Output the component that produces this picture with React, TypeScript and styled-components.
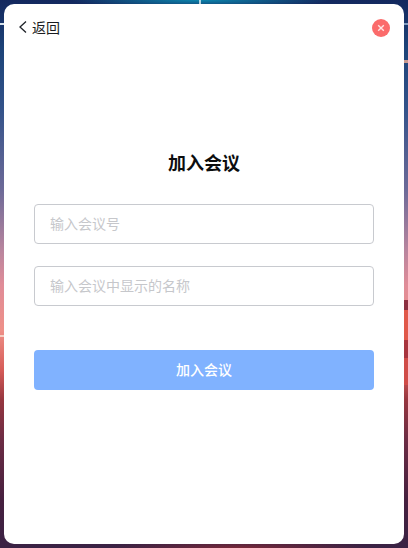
import React from "react";
import styled, { createGlobalStyle } from "styled-components";

const GlobalStyle = createGlobalStyle`
  html, body { margin: 0; padding: 0; height: 100%; }
  #root { height: 100%; }
  * { box-sizing: border-box; }
  input::placeholder { color: #c6c7cb; opacity: 1; }
`;

const Backdrop = styled.div`
  width: 408px;
  height: 548px;
  padding: 4px;
  overflow: hidden;
  font-family: "Noto Sans CJK SC", "Liberation Sans", sans-serif;
  background:
    linear-gradient(#ffffffb0, #ffffffb0) 199px 0 / 2px 4px no-repeat,
    linear-gradient(#d8e4ee, #d8e4ee) 0 23px / 4px 2px no-repeat,
    linear-gradient(#7f9cc0, #7f9cc0) 404px 23px / 4px 2px no-repeat,
    linear-gradient(#c89a90, #c89a90) 404px 60px / 4px 3px no-repeat,
    linear-gradient(#f6d0c4, #f6d0c4) 0 335px / 4px 2px no-repeat,
    linear-gradient(#8c2f40, #8c2f40) 404px 300px / 4px 10px no-repeat,
    linear-gradient(#e0584a, #e0584a) 404px 310px / 4px 30px no-repeat,
    linear-gradient(#a8343e, #a8343e) 404px 340px / 4px 18px no-repeat,
    linear-gradient(#d04c48, #d04c48) 404px 358px / 4px 27px no-repeat,
    radial-gradient(ellipse 130px 8px at 200px 0, #0c86ae 0%, #0c86ae00 100%),
    radial-gradient(ellipse 130px 8px at 240px 548px, #7a2838 0%, #7a283800 100%),
    linear-gradient(
      180deg,
      #13285e 0px,
      #1d4479 50px,
      #34538a 110px,
      #6d6a98 190px,
      #b8859e 250px,
      #e08c98 285px,
      #ee9088 330px,
      #d65c58 370px,
      #96363f 400px,
      #6c2c44 440px,
      #46203f 500px,
      #3a2244 548px
    );
`;

const Card = styled.main`
  height: 540px;
  border-radius: 10px;
  background: #fff;
  padding: 14px 14px 0;
  display: flex;
  flex-direction: column;
`;

const TopBar = styled.header`
  display: flex;
  align-items: center;
  justify-content: space-between;
  height: 20px;
`;

const BackButton = styled.button`
  display: flex;
  align-items: center;
  gap: 4px;
  border: 0;
  padding: 0 0 2px;
  background: none;
  font: 14px/18px "Noto Sans CJK SC", sans-serif;
  color: #1a1c20;
  height: 20px;
`;

const CloseButton = styled.button`
  width: 18px;
  height: 18px;
  border: 0;
  padding: 0;
  border-radius: 50%;
  background: #fb6b6b;
  display: flex;
  align-items: center;
  justify-content: center;
`;

const Form = styled.form`
  display: flex;
  flex-direction: column;
  padding: 0 16px;
`;

const Title = styled.h1`
  margin: 111px 0 29px;
  height: 26px;
  font: 700 18px/26px "Noto Sans CJK SC", sans-serif;
  color: #0c0d0e;
  text-align: center;
`;

const Field = styled.input`
  width: 340px;
  height: 40px;
  margin-bottom: 22px;
  padding: 0 15px 2px;
  border: 1px solid #c8cacf;
  border-radius: 4px;
  outline: none;
  background: #fff;
  font: 14px "Noto Sans CJK SC", sans-serif;
  color: #1f2329;
`;

const Submit = styled.button`
  width: 340px;
  height: 40px;
  margin-top: 22px;
  padding: 0 0 2px;
  border: 0;
  border-radius: 4px;
  background: #80b2ff;
  color: #fff;
  font: 500 14px "Noto Sans CJK SC", sans-serif;
`;

export default function App() {
  return (
    <>
      <GlobalStyle />
      <Backdrop>
        <Card>
          <TopBar>
            <BackButton type="button">
              <svg width="10" height="14" viewBox="0 0 10 14" fill="none">
                <path d="M8 1.5 2 7l6 5.5" stroke="#1f2329" strokeWidth="1.3" />
              </svg>
              返回
            </BackButton>
            <CloseButton type="button" aria-label="关闭">
              <svg width="8" height="8" viewBox="0 0 8 8" fill="none">
                <path d="M1.2 1.2l5.6 5.6M6.8 1.2 1.2 6.8" stroke="#ffe4e4" strokeWidth="1.4" />
              </svg>
            </CloseButton>
          </TopBar>
          <Form>
            <Title>加入会议</Title>
            <Field placeholder="输入会议号" />
            <Field placeholder="输入会议中显示的名称" />
            <Submit type="button">加入会议</Submit>
          </Form>
        </Card>
      </Backdrop>
    </>
  );
}
